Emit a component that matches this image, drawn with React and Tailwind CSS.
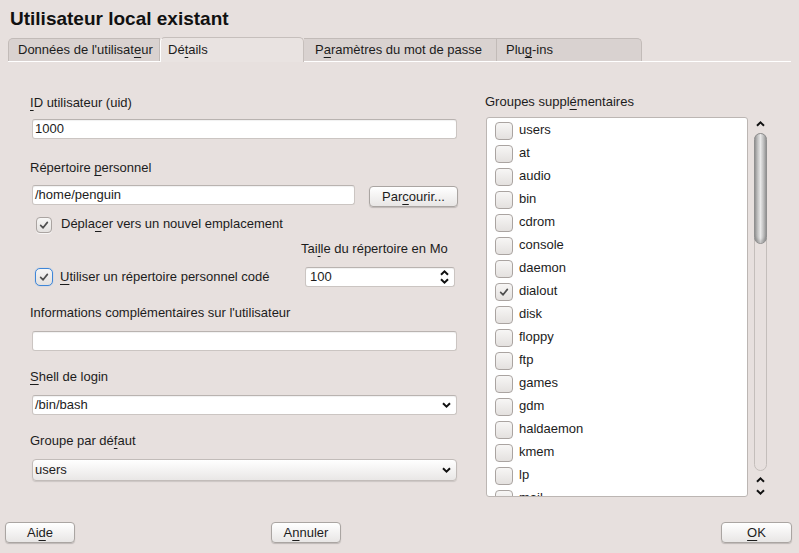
import React from 'react';

const groupes = [
    'users', 'at', 'audio', 'bin', 'cdrom', 'console', 'daemon', 'dialout', 'disk',
    'floppy', 'ftp', 'games', 'gdm', 'haldaemon', 'kmem', 'lp', 'mail',
];

// Lettre soulignée (raccourci clavier)
function U({ children }) {
    return <span className="underline underline-offset-[3px] decoration-1">{children}</span>;
}

function CheckMark({ size = 12 }) {
    return (
        <svg width={size} height={size} viewBox="0 0 16 16">
            <path d="M3.5 8.5 L6.8 11.8 L12.5 4.5" fill="none" stroke="#4f4f4f" strokeWidth="2.2" strokeLinecap="round" strokeLinejoin="round" />
        </svg>
    );
}

function Chevron({ down }) {
    return (
        <svg width="9" height="6" viewBox="0 0 9 6" className="block">
            <path d={down ? 'M1 1.2 L4.5 4.6 L8 1.2' : 'M1 4.8 L4.5 1.4 L8 4.8'} fill="none" stroke="#111" strokeWidth="2" />
        </svg>
    );
}

function Box({ checked, size = 'w-[16px] h-[16px]' }) {
    return (
        <div className={`${size} shrink-0 rounded-[4px] border border-[#aaa4a1] bg-linear-to-b from-[#f7f6f5] to-[#e4e1df] shadow-[0_1px_0_rgba(255,255,255,0.7)] flex items-center justify-center`}>
            {checked && <CheckMark />}
        </div>
    );
}

function Field({ className = '', children }) {
    return (
        <div className={`h-[20px] bg-white border border-[#cbc5c2] border-t-[#b9b3b0] rounded-[3px] shadow-[inset_0_1px_1px_rgba(0,0,0,0.06)] flex items-center pl-[2px] pr-[5px] ${className}`}>
            {children}
        </div>
    );
}

function Button({ className = '', children }) {
    return (
        <div className={`h-[21px] rounded-[4px] border border-[#aaa5a2] bg-linear-to-b from-white to-[#e8e6e5] shadow-[0_1px_1px_rgba(0,0,0,0.18)] flex items-center justify-center ${className}`}>
            {children}
        </div>
    );
}

export default function App() {
    return (
        <div className="w-[799px] h-[553px] overflow-hidden bg-[#e7e0de] text-[#1c1c1c] text-[13px] leading-[16px] font-['Liberation_Sans',Arial,sans-serif] flex flex-col">
            <div className="h-[37px] pl-[10px] pt-[8px] text-[19px] leading-[22px] font-bold text-[#111]">Utilisateur local existant</div>

            {/* Onglets */}
            <div className="ml-[8px] w-[783px] h-[25px] flex items-end border-b border-white">
                <div className="w-[152px] h-[23px] pl-[9px] pt-[3px] bg-[#d9d2d0] border border-b-0 border-[#c2bbb8] rounded-tl-[5px]">
                    Données de l'utilisat<U>e</U>ur
                </div>
                <div className="w-[144px] h-[25px] -mb-px pl-[7px] pt-[4px] bg-[#e9e3e1] border border-b-0 border-[#c6bfbc] border-l-white rounded-t-[5px] relative">
                    Dé<U>t</U>ails
                </div>
                <div className="w-[192px] h-[23px] pl-[11px] pt-[3px] bg-[#d9d2d0] border-t border-[#c2bbb8]">
                    P<U>a</U>ramètres du mot de passe
                </div>
                <div className="w-[146px] h-[23px] pl-[9px] pt-[3px] bg-[#d9d2d0] border border-b-0 border-[#c2bbb8] rounded-tr-[5px]">
                    Plu<U>g</U>-ins
                </div>
            </div>

            <div className="h-[459px] flex">
                {/* Colonne gauche */}
                <div className="ml-[30px] w-[428px] pt-[33px] flex flex-col">
                    <div><U>I</U>D utilisateur (uid)</div>
                    <Field className="mt-[8px] ml-[2px] w-[425px]">1000</Field>

                    <div className="mt-[21px]">Répertoire <U>p</U>ersonnel</div>
                    <div className="mt-[9px] flex items-start">
                        <Field className="ml-[2px] w-[323px]">/home/penguin</Field>
                        <Button className="ml-[14px] mt-[1px] w-[89px] h-[20px]">Par<U>c</U>ourir...</Button>
                    </div>

                    <div className="mt-[9px] h-[16px] flex items-center">
                        <div className="ml-[6px] mt-[2px]"><Box checked /></div>
                        <span className="ml-[9px]">Dépla<U>c</U>er vers un nouvel emplacement</span>
                    </div>

                    <div className="mt-[9px] ml-[271px]">Tai<U>l</U>le du répertoire en Mo</div>
                    <div className="mt-[10px] h-[20px] flex items-center">
                        <div className="ml-[5px] w-[18px] h-[18px] rounded-[5px] border-[1.5px] border-[#3f86d8] shadow-[0_0_1px_#6aa6e6] flex items-center justify-center bg-linear-to-b from-[#f7f6f5] to-[#e4e1df]">
                            <CheckMark />
                        </div>
                        <span className="ml-[7px]"><U>U</U>tiliser un répertoire personnel codé</span>
                        <Field className="ml-auto mr-[3px] w-[150px] pl-[4px] justify-between">
                            <span>100</span>
                            <div className="flex flex-col gap-[2px]">
                                <Chevron />
                                <Chevron down />
                            </div>
                        </Field>
                    </div>

                    <div className="mt-[18px]">Informations complémentaires sur l'utilisateur</div>
                    <Field className="mt-[10px] ml-[2px] w-[425px]" />

                    <div className="mt-[18px]"><U>S</U>hell de login</div>
                    <Field className="mt-[10px] ml-[2px] w-[425px] justify-between">
                        <span>/bin/bash</span>
                        <Chevron down />
                    </Field>

                    <div className="mt-[18px]">Groupe par dé<U>f</U>aut</div>
                    <div className="mt-[10px] ml-[2px] w-[425px] h-[22px] rounded-[4px] border border-[#c2bcb9] bg-linear-to-b from-white to-[#e9e7e6] shadow-[0_1px_1px_rgba(0,0,0,0.12)] flex items-center justify-between pl-[2px] pr-[5px]">
                        <span>users</span>
                        <Chevron down />
                    </div>
                </div>

                {/* Colonne droite */}
                <div className="ml-[27px] pt-[32px] flex flex-col">
                    <div>Groupes suppl<U>é</U>mentaires</div>
                    <div className="mt-[7px] flex">
                        <div className="ml-[1px] w-[262px] h-[380px] bg-white border border-[#bcb6b3] rounded-[3px] overflow-hidden pt-[1px] pl-[8px]">
                            {groupes.map((g) => (
                                <div key={g} className="h-[23px] flex items-center">
                                    <Box checked={g === 'dialout'} size="w-[18px] h-[18px]" />
                                    <span className="ml-[6px] -mt-[1px]">{g}</span>
                                </div>
                            ))}
                        </div>

                        {/* Barre de défilement */}
                        <div className="ml-[6px] w-[13px] flex flex-col items-center pt-[4px]">
                            <Chevron />
                            <div className="mt-[6px] w-[13px] h-[338px] rounded-full border border-[#c4bebb]">
                                <div className="-mx-px -mt-px h-[111px] rounded-full border border-[#8f8f8f] bg-linear-to-r from-[#9e9e9e] via-[#e8e8e8] to-[#9e9e9e] shadow-[inset_0_-3px_3px_rgba(0,0,0,0.15)]" />
                            </div>
                            <div className="mt-[6px]"><Chevron /></div>
                            <div className="mt-[6px]"><Chevron down /></div>
                        </div>
                    </div>
                </div>
            </div>

            {/* Boutons du bas */}
            <div className="flex pt-[1px]">
                <Button className="ml-[5px] w-[70px]">Ai<U>d</U>e</Button>
                <Button className="ml-[196px] w-[70px]">A<U>n</U>nuler</Button>
                <Button className="ml-auto mr-[7px] w-[71px]"><U>O</U>K</Button>
            </div>
        </div>
    );
}
